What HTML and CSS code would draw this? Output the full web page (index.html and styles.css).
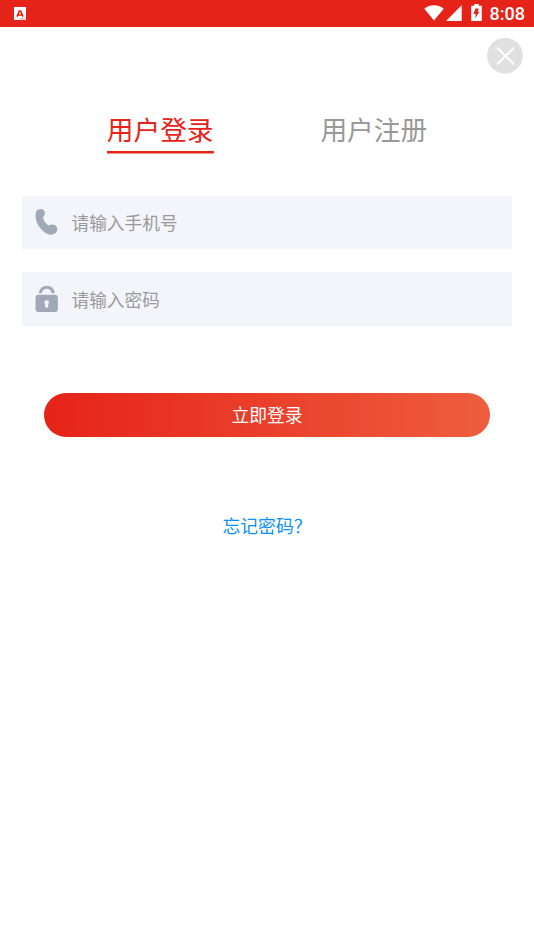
FILE: index.html
```html
<!DOCTYPE html>
<html lang="zh-CN">
<head>
<meta charset="utf-8">
<meta name="viewport" content="width=device-width, initial-scale=1">
<title>用户登录</title>
<link rel="stylesheet" href="styles.css">
</head>
<body>
<header class="status">
  <svg class="status-app" width="12" height="13" viewBox="0 0 12 13"><path fill="#fff" d="M0 0h12v13H0z"/><path fill="none" stroke="#e62318" stroke-width="1.7" d="M3 9.6 5.4 4h1.2L9 9.6M4 8h4"/><path stroke="#e62318" stroke-opacity=".6" d="M6 11.8h5"/></svg>
  <div class="status-right">
    <svg class="wifi" width="20" height="16" viewBox="0 0 20 16"><path fill="#fff" d="M10 15.6.3 3.7C6-.8 14-.8 19.7 3.7z"/></svg>
    <svg class="signal" width="16" height="16" viewBox="0 0 16 16"><path fill="#fff" d="M0 16 15.7.3V16z"/></svg>
    <svg class="battery" width="11" height="17" viewBox="0 0 11 17"><path fill="#fff" d="M3.2 0h4.6v1.8h2.5q.5 0 .5.5v14.2q0 .5-.5.5H.7q-.5 0-.5-.5V2.3q0-.5.5-.5h2.5z"/><path fill="#e62318" d="M4.4 4.4h3.4L6.7 7.8h1.700L4.200 14.300l.5-4.200H2.600z"/></svg>
    <span class="clock">8:08</span>
  </div>
</header>
<main>
  <div class="top">
    <button class="close" aria-label="关闭"><svg width="36" height="36" viewBox="0 0 36 36"><circle cx="18" cy="17.7" r="17.9" fill="#e0e0e0"/><path d="m10.600 10.300 15.800 15.400m0-15.400L10.600 25.700" stroke="#fff" stroke-width="2" stroke-linecap="round"/></svg></button>
  </div>
  <nav class="tabs">
    <div class="tab"><a class="tab-label active">用户登录</a></div>
    <div class="tab"><a class="tab-label">用户注册</a></div>
  </nav>
  <form class="form">
    <label class="field">
      <svg width="24" height="28" viewBox="0 0 24 28"><path fill="#a1a8b8" d="M1.200 3.600C2.200.6 7.500-.2 9.400 3c1.100 2.100.4 4.500-1.400 6.200.5 3.200 2.500 6.300 5.600 8.200 1.700-1.100 4-1.300 5.900-.3 1.900 1 2.900 2.700 2.800 4.300-.2 2.900-3.400 5.500-7 5.300C7.500 26-2 13.500 1.200 3.600z"/></svg>
      <input type="text" placeholder="请输入手机号">
    </label>
    <label class="field">
      <svg width="24" height="28" viewBox="0 0 24 28"><path fill="none" stroke="#a1a8b8" stroke-width="2.900" d="M5.200 8.300C6 4.200 8.600 2.200 11.800 2.200s5.800 2 6.600 6.100"/><rect x=".5" y="9.700" width="22.400" height="17.300" rx="3" fill="#a1a8b8"/><path fill="#f4f5fb" d="M11.700 15.200a2.200 2.200 0 0 1 1.600 3.800v2.800q0 1-1.600 1t-1.600-1V19a2.200 2.200 0 0 1 1.600-3.800z"/></svg>
      <input type="password" placeholder="请输入密码">
    </label>
    <button class="submit" type="button">立即登录</button>
  </form>
  <a class="forgot">忘记密码？</a>
</main>
</body>
</html>
```
FILE: styles.css
```css
* { box-sizing: border-box; }

body {
  margin: 0;
  background: #fff;
  font-family: "Noto Sans CJK SC", sans-serif;
}

svg { display: block; }

.status {
  display: flex;
  justify-content: space-between;
  height: 26.700px;
  padding: 0 9px 0 14px;
  background: #e62318;
}

.status-app { margin-top: 7px; }
.status-right { display: flex; align-items: flex-start; }
.wifi { margin-top: 5px; }
.signal { margin: 5px 0 0 2px; }
.battery { margin: 4px 0 0 9px; }

.clock {
  margin: 1px 0 0 8px;
  color: #fff;
  font: 500 18px/26px Roboto, sans-serif;
}

.top {
  display: flex;
  justify-content: flex-end;
  padding: 11px 11px 0 0;
}

.close {
  padding: 0;
  border: 0;
  background: none;
}

.tabs {
  display: flex;
  padding: 35px 53.400px 0;
}

.tab { flex: 1; text-align: center; }

.tab-label {
  display: inline-block;
  height: 45px;
  color: #999;
  font-size: 26.700px;
  line-height: 40px;
}

.tab-label.active {
  background: linear-gradient(#e62318, #e62318) bottom / 100% 2.500px no-repeat;
  color: #e62318;
}

.form {
  display: flex;
  flex-direction: column;
  gap: 23.500px;
  padding: 42px 22.300px 0;
}

.field {
  display: flex;
  align-items: center;
  gap: 12.500px;
  height: 53.300px;
  padding-left: 12.700px;
  background: #f4f5fb;
}

.field input {
  flex: 1;
  height: 100%;
  padding: 0;
  border: 0;
  outline: 0;
  background: none;
  font: 17.700px "Noto Sans CJK SC", sans-serif;
}

.field input::placeholder { color: #999; }

.submit {
  height: 44px;
  margin: 43.500px 22.200px 0;
  padding: 0 0 1px;
  border: 0;
  border-radius: 22px;
  background: linear-gradient(to right, #e62318, #ee5d3e);
  color: #fff;
  font: 17.800px/42px "Noto Sans CJK SC", sans-serif;
}

.forgot {
  display: block;
  margin-top: 74.500px;
  color: #0a91fa;
  font-size: 17.800px;
  line-height: 28px;
  text-align: center;
}
```
